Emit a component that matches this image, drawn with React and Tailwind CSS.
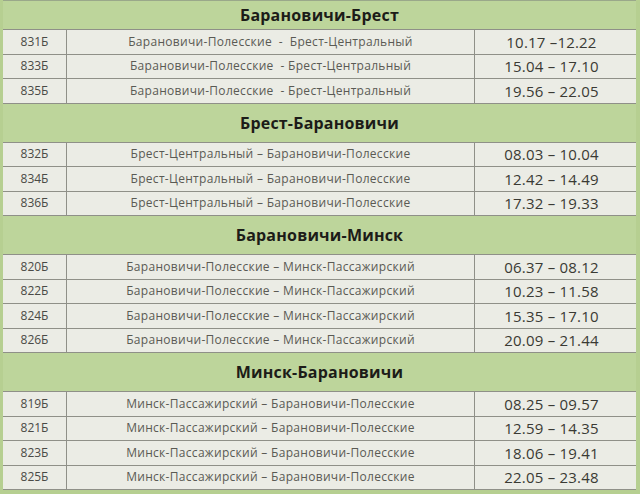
const sections = [
  {
    title: 'Барановичи-Брест',
    first: true,
    rows: [
      ['831Б', 'Барановичи-Полесские  -  Брест-Центральный', '10.17 –12.22'],
      ['833Б', 'Барановичи-Полесские  - Брест-Центральный', '15.04 – 17.10'],
      ['835Б', 'Барановичи-Полесские  - Брест-Центральный', '19.56 – 22.05'],
    ],
  },
  {
    title: 'Брест-Барановичи',
    rows: [
      ['832Б', 'Брест-Центральный – Барановичи-Полесские', '08.03 – 10.04'],
      ['834Б', 'Брест-Центральный – Барановичи-Полесские', '12.42 – 14.49'],
      ['836Б', 'Брест-Центральный – Барановичи-Полесские', '17.32 – 19.33'],
    ],
  },
  {
    title: 'Барановичи-Минск',
    rows: [
      ['820Б', 'Барановичи-Полесские – Минск-Пассажирский', '06.37 – 08.12'],
      ['822Б', 'Барановичи-Полесские – Минск-Пассажирский', '10.23 – 11.58'],
      ['824Б', 'Барановичи-Полесские – Минск-Пассажирский', '15.35 – 17.10'],
      ['826Б', 'Барановичи-Полесские – Минск-Пассажирский', '20.09 – 21.44'],
    ],
  },
  {
    title: 'Минск-Барановичи',
    rows: [
      ['819Б', 'Минск-Пассажирский – Барановичи-Полесские', '08.25 – 09.57'],
      ['821Б', 'Минск-Пассажирский – Барановичи-Полесские', '12.59 – 14.35'],
      ['823Б', 'Минск-Пассажирский – Барановичи-Полесские', '18.06 – 19.41'],
      ['825Б', 'Минск-Пассажирский – Барановичи-Полесские', '22.05 – 23.48'],
    ],
  },
]

function Row({ num, route, time }) {
  return (
    <div className="flex h-[24.5px] border-b border-[#8f9088] bg-[#ebece5]">
      <div className="flex w-[64px] items-center justify-center border-r border-[#8f9088] text-[12px] text-[#4a4a46]">
        {num}
      </div>
      <div className="flex w-[408px] items-center justify-center whitespace-pre border-r border-[#8f9088] text-[12px] tracking-[0.3px] text-[#5a5a54]">
        {route}
      </div>
      <div className="flex flex-1 items-center justify-center pr-[8px] text-[15px] tracking-[0.2px] text-[#3a3a34]">
        {time}
      </div>
    </div>
  )
}

export default function App() {
  return (
    <div
      className="h-[494px] w-[640px] overflow-hidden bg-[#b6cf91] pl-[3px] pr-[4px]"
      style={{ fontFamily: '"Open Sans", "Liberation Sans", sans-serif' }}
    >
      {sections.map((s) => (
        <div key={s.title}>
          <div
            className={`flex items-center justify-center border-b border-[#8f9088] bg-[#bdd59b] text-[16px] font-bold tracking-[0.2px] text-[#1c1c18] ${
              s.first ? 'h-[30px] border-t border-t-[#9aa88a]' : 'h-[39px]'
            }`}
          >
            {s.title}
          </div>
          {s.rows.map((r) => (
            <Row key={r[0]} num={r[0]} route={r[1]} time={r[2]} />
          ))}
        </div>
      ))}
    </div>
  )
}
